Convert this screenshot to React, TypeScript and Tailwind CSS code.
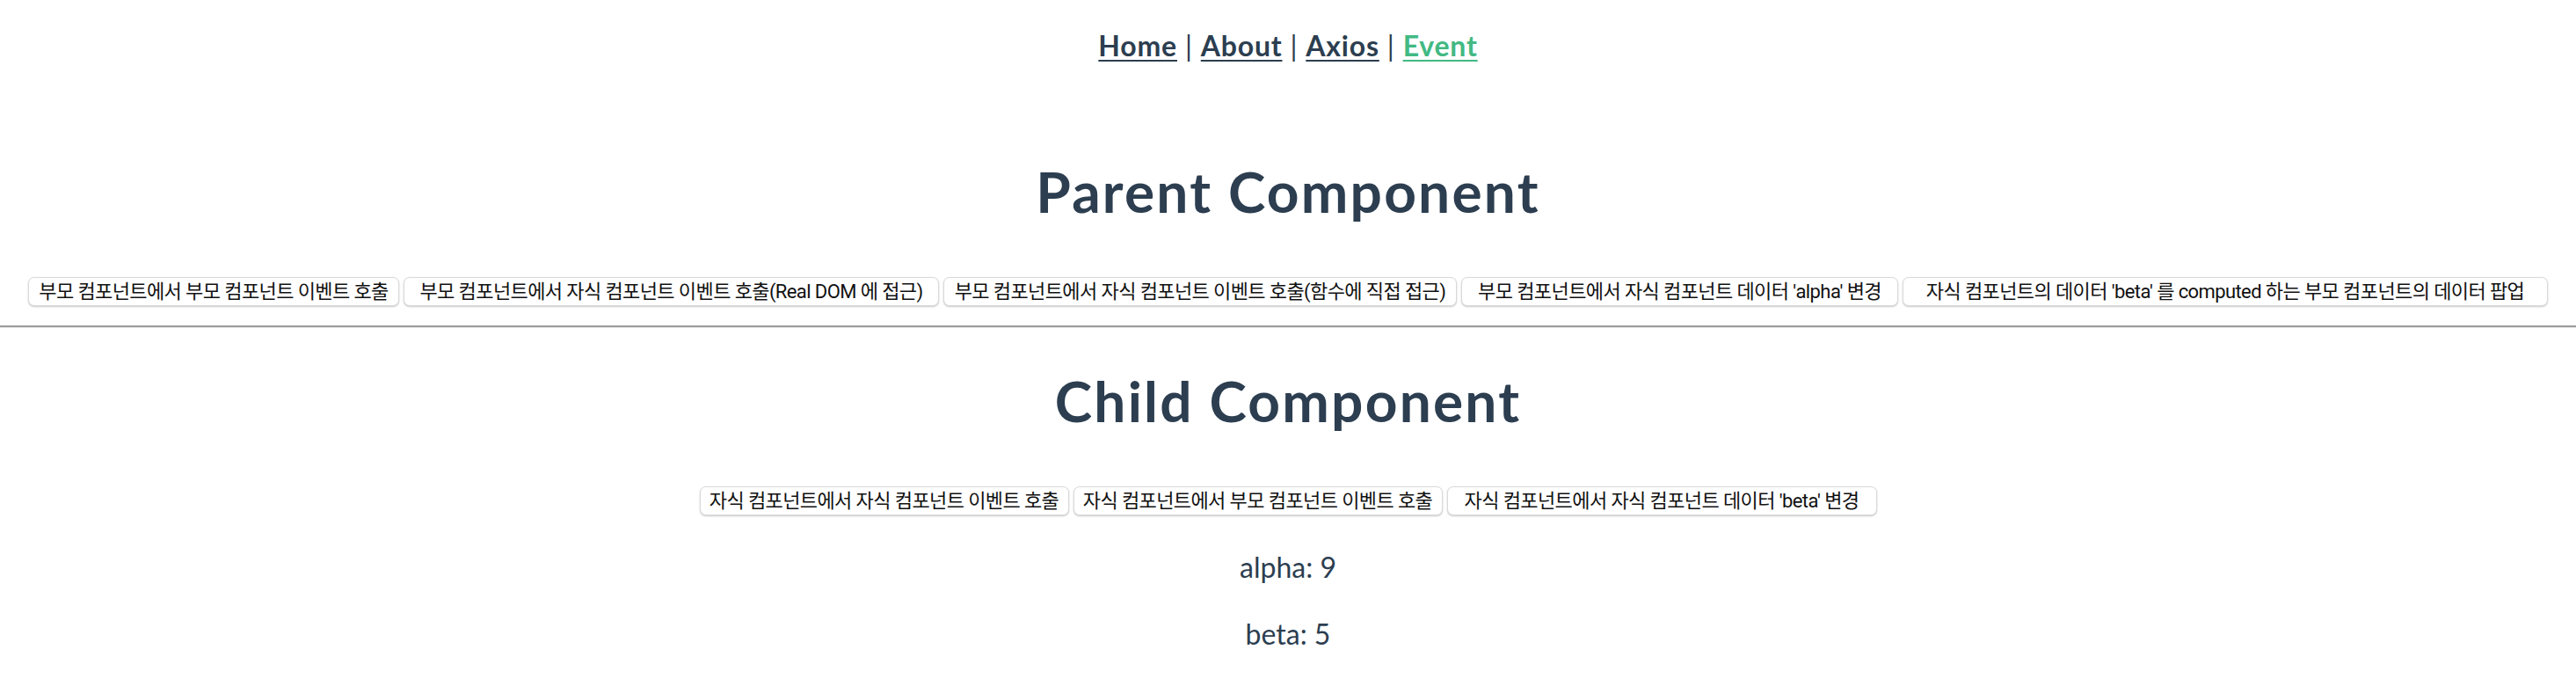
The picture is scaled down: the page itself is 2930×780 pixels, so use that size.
import React from "react";

const row1 = [
  { label: "부모 컴포넌트에서 부모 컴포넌트 이벤트 호출", w: "w-[422px]" },
  { label: "부모 컴포넌트에서 자식 컴포넌트 이벤트 호출(Real DOM 에 접근)", w: "w-[609px]" },
  { label: "부모 컴포넌트에서 자식 컴포넌트 이벤트 호출(함수에 직접 접근)", w: "w-[584px]" },
  { label: "부모 컴포넌트에서 자식 컴포넌트 데이터 'alpha' 변경", w: "w-[497px]" },
  { label: "자식 컴포넌트의 데이터 'beta' 를 computed 하는 부모 컴포넌트의 데이터 팝업", w: "w-[734px]" },
];

const row2 = [
  { label: "자식 컴포넌트에서 자식 컴포넌트 이벤트 호출", w: "w-[420px]" },
  { label: "자식 컴포넌트에서 부모 컴포넌트 이벤트 호출", w: "w-[420px]" },
  { label: "자식 컴포넌트에서 자식 컴포넌트 데이터 'beta' 변경", w: "w-[489px]" },
];

function Btn({ label, w }: { label: string; w: string }) {
  return (
    <button
      className={`${w} h-[33px] shrink-0 whitespace-nowrap rounded-[7px] border border-[#dadada] bg-white text-center text-[22px] leading-[31px] tracking-[-0.6px] text-[#111111] shadow-[0_1px_2px_rgba(0,0,0,0.22)] [font-family:Roboto,'Noto_Sans_CJK_KR',sans-serif]`}
    >
      {label}
    </button>
  );
}

export default function App() {
  const link = "font-bold underline decoration-[2px] underline-offset-[4px]";
  return (
    <div className="min-h-[780px] w-full bg-white text-[#2c3e50] [font-family:Lato,'Noto_Sans',sans-serif]">
      <nav className="flex justify-center pt-[30px] text-[32px] leading-[44px] tracking-[0.8px]">
        <span className="whitespace-pre">
          <a className={link}>Home</a>
          {" | "}
          <a className={link}>About</a>
          {" | "}
          <a className={link}>Axios</a>
          {" | "}
          <a className={`${link} text-[#42b983]`}>Event</a>
        </span>
      </nav>

      <h1 className="mt-[104px] text-center text-[64px] font-bold leading-[80px] tracking-[2.2px]">Parent Component</h1>

      <div className="mt-[57px] flex justify-center gap-[5px]">
        {row1.map((b) => (
          <Btn key={b.label} {...b} />
        ))}
      </div>

      <div className="mt-[22px] h-[3px] w-full border-t-2 border-b border-t-[#9e9e9e] border-b-[#e6e6e6]" />

      <h1 className="mt-[43px] text-center text-[64px] font-bold leading-[80px] tracking-[2.2px]">Child Component</h1>

      <div className="mt-[57px] flex justify-center gap-[5px]">
        {row2.map((b) => (
          <Btn key={b.label} {...b} />
        ))}
      </div>

      <p className="mt-[37px] text-center text-[32px] leading-[44px]">alpha: 9</p>
      <p className="mt-[32px] text-center text-[32px] leading-[44px]">beta: 5</p>
    </div>
  );
}
